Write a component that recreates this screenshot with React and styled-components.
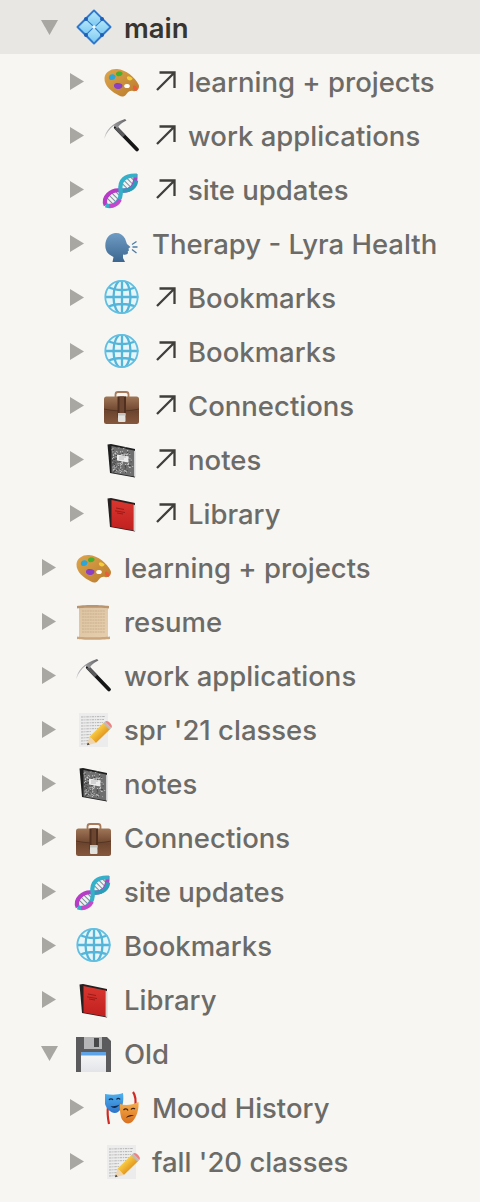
import React from 'react'
import styled, { createGlobalStyle } from 'styled-components'

const Global = createGlobalStyle`
  html, body { margin: 0; padding: 0; background: #fff; }
`

const Panel = styled.div`
  width: 480px;
  height: 1202px;
  background: #f7f6f3;
  font-family: Inter, "Liberation Sans", sans-serif;
  overflow: hidden;
`

const Row = styled.div`
  display: flex;
  align-items: center;
  height: 54px;
  padding-left: ${p => 41 + p.$depth * 28}px;
  background: ${p => (p.$active ? '#e8e7e4' : 'transparent')};
`

const CaretBox = styled.div`
  width: 35px;
  flex: none;
  display: flex;
  align-items: center;
  padding-left: ${p => (p.$open ? 0 : 1)}px;
  box-sizing: border-box;
`

const IconBox = styled.div`
  width: 36px;
  height: 36px;
  flex: none;
  svg { display: block; overflow: visible; }
`

const ArrowBox = styled.div`
  flex: none;
  width: 20px;
  height: 20px;
  margin-left: 16px;
  svg { display: block; }
`

const Label = styled.span`
  margin-left: 12px;
  padding-top: 2px;
  font-size: 27.5px;
  line-height: 52px;
  white-space: nowrap;
  font-weight: ${p => (p.$active ? 600 : 500)};
  color: ${p => (p.$active ? '#37352f' : '#6c6b67')};
`

const Caret = ({ open }) =>
  open ? (
    <svg width="17" height="15" viewBox="0 0 17 15"><path d="M0 0H17L8.5 15Z" fill="#a8a7a2" /></svg>
  ) : (
    <svg width="14" height="17" viewBox="0 0 14 17"><path d="M0 0L14 8.5L0 17Z" fill="#a8a7a2" /></svg>
  )

const LinkArrow = () => (
  <svg width="20" height="20" viewBox="0 0 20 20" fill="none" stroke="#3f3e3b" strokeWidth="2.3">
    <path d="M1 19L18.500 1.500M3.500 1.500H18.500V17" />
  </svg>
)

const S = ({ children }) => <svg width="36" height="36" viewBox="0 0 36 36">{children}</svg>

const MainIcon = () => (
  <S>
    <defs>
      <linearGradient id="tile" x1="0" y1="0" x2="0" y2="1">
        <stop offset="0" stopColor="#b5e6f9" />
        <stop offset="1" stopColor="#7cc9f1" />
      </linearGradient>
    </defs>
    <path d="M18 1.500L34.500 18L18 34.500L1.500 18Z" fill="#2f78cc" stroke="#2f78cc" strokeWidth="2" strokeLinejoin="round" />
    <path d="M18 2.800L25.800 10.600L18.500 17.500L10.600 10.200Z" fill="url(#tile)" />
    <path d="M26.500 11.300L33.200 18L25.800 25.300L19.200 18.200Z" fill="url(#tile)" />
    <path d="M18 18.800L25 26L18 33.200L10.800 25.800Z" fill="url(#tile)" />
    <path d="M10 11L17.300 18L10 25L2.800 18Z" fill="url(#tile)" />
    <circle cx="18" cy="18" r="1.800" fill="#eef9fe" />
    <circle cx="10" cy="10" r="2" fill="#1f5fb4" />
    <circle cx="26" cy="10" r="2" fill="#1f5fb4" />
    <circle cx="10" cy="26" r="2" fill="#1f5fb4" />
    <circle cx="26" cy="26" r="2" fill="#1f5fb4" />
  </S>
)

const PaletteIcon = () => (
  <S>
    <defs>
      <linearGradient id="wood" x1="0" y1="0" x2="1" y2="1">
        <stop offset="0" stopColor="#dfa64c" />
        <stop offset="1" stopColor="#b87a2c" />
      </linearGradient>
    </defs>
    <path d="M0.500 15C1 9 7 5.500 13 6C22 6.800 31 14 34.800 22C35.800 25.500 33 29 29 28C26.500 27.400 24.500 28.500 22.500 31C20.500 34 17.500 34.300 15 32.500C8 29 0 23 0.500 15Z" fill="url(#wood)" />
    <path d="M5 13.500C6 10.500 10 10.500 11.500 13C12 15.500 9 17.500 6.500 17C5.200 16.500 4.500 15 5 13.500Z" fill="#2aa6dd" />
    <path d="M12 10.500C13 8 17 8 18.500 9.800C19 12 16.500 13.500 14 13.200C12.800 13 11.800 12 12 10.500Z" fill="#43b02f" />
    <path d="M23 14C24 12.500 26 13.200 28.500 15.300C28.500 17 26.500 17.800 24.800 17.300C23.500 16.800 22.600 15.300 23 14Z" fill="#f2cf3a" />
    <path d="M10 22C11 19.500 15 19.500 18 21.300C19.500 23.500 17 26.500 13.500 26C11 25.500 9.500 24 10 22Z" fill="#8a3fc4" />
    <ellipse cx="23" cy="23" rx="2.800" ry="2" fill="#fff" />
    <path d="M29 24C29.500 22 31 22 32.500 24.200C33.800 26 33.500 28 32 27.700C30.500 27.400 28.800 26 29 24Z" fill="#ee5a3c" />
  </S>
)

const PickIcon = () => (
  <S>
    <defs>
      <linearGradient id="steel" x1="0" y1="1" x2="1" y2="0">
        <stop offset="0" stopColor="#d4d4d4" />
        <stop offset="1" stopColor="#66666a" />
      </linearGradient>
    </defs>
    <path d="M11.800 10.500L33 32.500" stroke="#161617" strokeWidth="3.800" strokeLinecap="round" />
    <path d="M11.800 10.500L20 19" stroke="#5a5a5c" strokeWidth="3.600" />
    <path d="M0.300 22C1 14 8 6 21 2L22.500 3.500C17 6 14.500 9 13.500 11.500L10 8.500C5.500 11.500 2.500 16 0.300 22Z" fill="url(#steel)" />
  </S>
)

const DnaIcon = () => (
  <S>
    <g transform="rotate(-45 18 18)" fill="none" strokeLinecap="round">
      <ellipse cx="6.500" cy="18" rx="9.500" ry="6.500" fill="#eef3f5" />
      <ellipse cx="27" cy="18" rx="9.500" ry="6.500" fill="#eef3f5" />
      <path d="M1 14V22M4.500 13V23M8 13V23M11.500 14V22M22 14V22M25.500 13V23M29 13V23M32.500 14V22" stroke="#7c8a90" strokeWidth="1" />
      <path d="M-5 18C-2 10 10 10 16 18C22 26 30 26 38 17" stroke="#b63cc6" strokeWidth="4.200" strokeLinecap="butt" />
      <path d="M16 18C22 26 29 26 34 22" stroke="#2a9db8" strokeWidth="4.200" strokeLinecap="butt" />
      <path d="M-5 18C-2 26 10 26 16 18C22 10 30 10 38 19" stroke="#35b0c8" strokeWidth="4.200" strokeLinecap="butt" />
      <path d="M-3 21C1 25 6 25 9 24" stroke="#c548cc" strokeWidth="4.200" strokeLinecap="butt" />
    </g>
  </S>
)

const SpeakIcon = () => (
  <S>
    <defs>
      <linearGradient id="head" x1="0" y1="0" x2="0" y2="1">
        <stop offset="0" stopColor="#6f9cc4" />
        <stop offset="1" stopColor="#3c668f" />
      </linearGradient>
    </defs>
    <path d="M11 8C15 7.500 19 9.500 21 13.500C22 16 22.500 18 23 19L26.500 22L24.500 23.500L25 25.500L23.800 26.300L24 28C23.500 29.500 21.500 30 19 29.500L19 33L21 37H8.500L9.500 32C4 29.500 1.300 26 1.300 20.500C1.300 13.500 5.500 8.500 11 8Z" fill="url(#head)" />
    <path d="M28 19.500L32.500 16.500M28.500 22L33.500 22M28 24.500L32.500 28" stroke="#4b7ba6" strokeWidth="1.300" fill="none" />
  </S>
)

const GlobeIcon = ({ id }) => (
  <S>
    <defs>
      <clipPath id={id}><circle cx="18" cy="18" r="16.500" /></clipPath>
    </defs>
    <circle cx="17.500" cy="18" r="17" fill="#e6f5fa" />
    <g clipPath={`url(#${id})`} fill="none" stroke="#55b5d8" strokeWidth="2.300">
      <path d="M18 0V36M0 18H36M4 8C12 12 24 12 32 8M4 28C12 24 24 24 32 28" />
      <ellipse cx="18" cy="18" rx="8.500" ry="17" />
    </g>
    <circle cx="17.500" cy="18" r="16.200" fill="none" stroke="#62bfe0" strokeWidth="1.800" />
  </S>
)

const CaseIcon = ({ id }) => (
  <S>
    <defs>
      <linearGradient id={id} x1="0" y1="0" x2="0" y2="1">
        <stop offset="0" stopColor="#a07657" />
        <stop offset="0.55" stopColor="#6d452e" />
        <stop offset="1" stopColor="#85583d" />
      </linearGradient>
    </defs>
    <path d="M11.500 10V7.500C11.500 6 12.500 5 14 5H22C23.500 5 24.500 6 24.500 7.500V10" fill="none" stroke="#a67a5b" strokeWidth="1.800" />
    <rect x="0" y="9.500" width="35" height="27.500" rx="2.500" fill={`url(#${id})`} />
    <path d="M0 22C10 24.500 25 24.500 35 22" stroke="#4d2f1e" strokeWidth="0.800" fill="none" />
    <rect x="13.500" y="9.500" width="8.500" height="21" fill="#4f3020" />
    <rect x="15.500" y="9.500" width="4.500" height="21" fill="#6d4631" />
    <rect x="14" y="26" width="7.500" height="9" rx="1" fill="#e4e2df" />
    <rect x="14" y="26" width="7.500" height="2.500" fill="#c4c2bf" />
  </S>
)

// pseudo random speckles for the composition book cover
const hash = n => {
  const v = Math.sin(n * 12.9898) * 43758.5453
  return v - Math.floor(v)
}
const speckles = Array.from({ length: 170 }, (_, i) => ({
  x: 8.500 + hash(i + 1) * 20.500,
  y: 6.500 + hash(i + 200) * 25,
  r: hash(i + 400) * 180,
  c: i % 3 === 0 ? '#2a2a2a' : '#e4e4e4',
}))

const NotebookIcon = () => (
  <S>
    <path d="M3.500 3.500L7 3L31 8V36.500L6 32Z" fill="#1e1e1e" />
    <path d="M7.500 5L30 9.500V35.500L7.500 31.500Z" fill="#6f6f6f" />
    {speckles.map((s, i) => (
      <rect key={i} x={s.x} y={s.y + (s.x - 8) * 0.18} width="1.100" height="0.600" fill={s.c} transform={`rotate(${s.r} ${s.x} ${s.y})`} />
    ))}
    <path d="M13 13.500L24.500 15.500V21.500L13 19.500Z" fill="#ededed" />
    <path d="M15 16H22M15 18H20" stroke="#999" strokeWidth="0.600" />
    <path d="M30 9.500L31.500 10.500V36L30 35.500Z" fill="#cfcfcf" />
  </S>
)

const RedBookIcon = ({ id }) => (
  <S>
    <defs>
      <linearGradient id={id} x1="0" y1="0" x2="0" y2="1">
        <stop offset="0" stopColor="#d9362f" />
        <stop offset="1" stopColor="#c0201f" />
      </linearGradient>
    </defs>
    <path d="M3.500 3.500L7 3L31 8V36.500L6 32Z" fill="#262020" />
    <path d="M7.500 5L29.500 9.500V35.500L7.500 31.500Z" fill={`url(#${id})`} />
    <path d="M29.500 9.500L31.500 10.500V36.500L29.500 35.500Z" fill="#d9d4d0" />
    <path d="M12 13L20 14.500M11 15.800L21 17.500M13 18L19 19" stroke="#8e1512" strokeWidth="0.800" />
  </S>
)

const ScrollIcon = () => (
  <S>
    <defs>
      <linearGradient id="parch" x1="0" y1="0" x2="1" y2="1">
        <stop offset="0" stopColor="#dcc3a2" />
        <stop offset="1" stopColor="#e6cdac" />
      </linearGradient>
    </defs>
    <rect x="3" y="3" width="29" height="32" fill="url(#parch)" />
    {[8, 11, 14, 17, 20, 23, 26, 29].map(y => (
      <path key={y} d={`M6 ${y}H29`} stroke="#c4a988" strokeWidth="0.800" strokeDasharray="2 0.600" />
    ))}
    <path d="M1 3C5 1.500 27 1.500 33 3V5.500C27 4.500 5 4.500 1 5.500Z" fill="#b99670" />
    <path d="M1 33.500C5 34.500 27 34.500 34 33.500V36C27 37 5 37 1 36Z" fill="#c9a67c" />
  </S>
)

const MemoIcon = ({ id }) => (
  <S>
    <defs>
      <linearGradient id={id} x1="0" y1="0" x2="1" y2="0">
        <stop offset="0" stopColor="#f7cc48" />
        <stop offset="1" stopColor="#e5991c" />
      </linearGradient>
    </defs>
    <rect x="3" y="2" width="29" height="34" fill="#ececec" />
    {[6, 9, 12, 15, 18, 21, 24, 27, 30, 33].map((y, i) => (
      <path key={y} d={`M5 ${y}L${i > 4 ? 15 : 29 - i} ${y - 0.500}`} stroke="#8f8f8f" strokeWidth="0.600" strokeDasharray="2.500 0.800 1.200 0.800" />
    ))}
    <g transform="translate(34 12) rotate(46)">
      <rect x="-4.500" y="4" width="9" height="20" fill={`url(#${id})`} />
      <rect x="-4.500" y="2.500" width="9" height="2.500" fill="#bdbdbd" />
      <path d="M-4.500 2.500C-4.500 -1 4.500 -1 4.500 2.500Z" fill="#e98484" />
      <path d="M-4.500 24H4.500L0 32Z" fill="#f0d4ab" />
      <path d="M-1.400 29.500H1.400L0 32Z" fill="#3a3a3a" />
    </g>
  </S>
)

const FloppyIcon = () => (
  <S>
    <defs>
      <linearGradient id="label" x1="0" y1="0" x2="0" y2="1">
        <stop offset="0" stopColor="#f8f8f8" />
        <stop offset="1" stopColor="#e2e4e8" />
      </linearGradient>
    </defs>
    <path d="M0 2H31L35 6V37H0Z" fill="#5b5b5e" />
    <rect x="8" y="2" width="18" height="12" fill="#b6b6b9" />
    <rect x="18" y="3" width="5" height="9" fill="#48484a" />
    <rect x="5" y="17" width="25" height="20" fill="url(#label)" />
    <rect x="5" y="17" width="25" height="3.500" fill="#5ea3e6" />
  </S>
)

const MasksIcon = () => (
  <S>
    <defs>
      <linearGradient id="blueM" x1="0" y1="0" x2="0" y2="1">
        <stop offset="0" stopColor="#4fb2f0" />
        <stop offset="1" stopColor="#2f74c8" />
      </linearGradient>
      <linearGradient id="orangeM" x1="0" y1="0" x2="0" y2="1">
        <stop offset="0" stopColor="#f5b04e" />
        <stop offset="1" stopColor="#d9701f" />
      </linearGradient>
    </defs>
    <path d="M4 18C3 24 4 30 5 35M29 3C32 7 32 13 31 19" stroke="#d22a22" strokeWidth="2.200" fill="none" />
    <path d="M1 5C8 6 14 6 19 4C20 11 19 20 14 23C9 26 3 21 1 15Z" fill="url(#blueM)" />
    <path d="M5 11C6 9.500 8 9.500 9 11M12.500 10.500C13.500 9 15.500 9 16 10.500" stroke="#102a4d" strokeWidth="1.300" fill="none" />
    <path d="M6.500 17C9 20 13 19.500 15.500 15.500C13 17 10 17.500 6.500 17Z" fill="#102a4d" />
    <path d="M16 15C22 17 28 16 34.500 13C35 20 33 28 28 33C24 36 19 34 17 28C16 23 15.500 19 16 15Z" fill="url(#orangeM)" />
    <path d="M19.500 21C21 19.500 23 19.500 24 21.500M27 20.500C28 19 30 19 31 20" stroke="#402010" strokeWidth="1.300" fill="none" />
    <path d="M22 29C24 25.500 28 25.500 30 27C27 27 25 27.500 22 29Z" fill="#402010" />
  </S>
)

const items = [
  { depth: 0, icon: <MainIcon />, label: 'main', open: true, active: true },
  { depth: 1, icon: <PaletteIcon />, label: 'learning + projects', link: true },
  { depth: 1, icon: <PickIcon />, label: 'work applications', link: true },
  { depth: 1, icon: <DnaIcon />, label: 'site updates', link: true },
  { depth: 1, icon: <SpeakIcon />, label: 'Therapy - Lyra Health' },
  { depth: 1, icon: <GlobeIcon id="g1" />, label: 'Bookmarks', link: true },
  { depth: 1, icon: <GlobeIcon id="g2" />, label: 'Bookmarks', link: true },
  { depth: 1, icon: <CaseIcon id="c1" />, label: 'Connections', link: true },
  { depth: 1, icon: <NotebookIcon />, label: 'notes', link: true },
  { depth: 1, icon: <RedBookIcon id="r1" />, label: 'Library', link: true },
  { depth: 0, icon: <PaletteIcon />, label: 'learning + projects' },
  { depth: 0, icon: <ScrollIcon />, label: 'resume' },
  { depth: 0, icon: <PickIcon />, label: 'work applications' },
  { depth: 0, icon: <MemoIcon id="m1" />, label: "spr '21 classes" },
  { depth: 0, icon: <NotebookIcon />, label: 'notes' },
  { depth: 0, icon: <CaseIcon id="c2" />, label: 'Connections' },
  { depth: 0, icon: <DnaIcon />, label: 'site updates' },
  { depth: 0, icon: <GlobeIcon id="g3" />, label: 'Bookmarks' },
  { depth: 0, icon: <RedBookIcon id="r2" />, label: 'Library' },
  { depth: 0, icon: <FloppyIcon />, label: 'Old', open: true },
  { depth: 1, icon: <MasksIcon />, label: 'Mood History' },
  { depth: 1, icon: <MemoIcon id="m2" />, label: "fall '20 classes" },
]

const App = () => (
  <Panel>
    <Global />
    {items.map((it, i) => (
      <Row key={i} $depth={it.depth} $active={it.active}>
        <CaretBox $open={it.open}><Caret open={it.open} /></CaretBox>
        <IconBox>{it.icon}</IconBox>
        {it.link && <ArrowBox><LinkArrow /></ArrowBox>}
        <Label $active={it.active}>{it.label}</Label>
      </Row>
    ))}
  </Panel>
)

export default App
